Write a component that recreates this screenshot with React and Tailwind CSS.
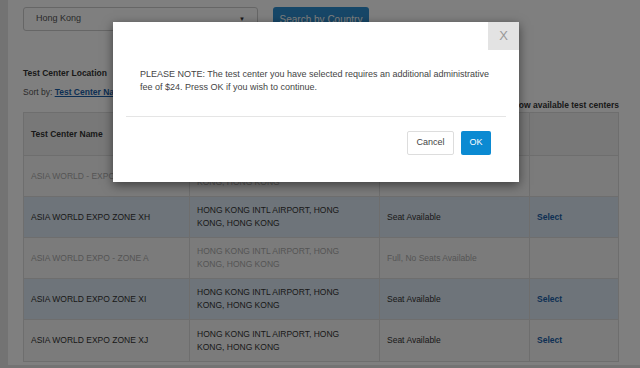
import React from 'react';

const rows = [
  { name: 'ASIA WORLD - EXPO - ZONE B', status: 'Full, No Seats Available', disabled: true },
  { name: 'ASIA WORLD EXPO ZONE XH', status: 'Seat Available', highlight: true },
  { name: 'ASIA WORLD EXPO - ZONE A', status: 'Full, No Seats Available', disabled: true },
  { name: 'ASIA WORLD EXPO ZONE XI', status: 'Seat Available', highlight: true },
  { name: 'ASIA WORLD EXPO ZONE XJ', status: 'Seat Available' },
];

const App = () => {
  return (
    <div className="relative w-[640px] h-[368px] overflow-hidden bg-[#e6e6e6] font-['Liberation_Sans',Arial,sans-serif]">
      <div className="ml-[8px] h-[365px] bg-white pl-[15px] pr-[21px]">
        <div className="flex items-center gap-[15px] pt-[7px]">
          <div className="w-[235px] h-[24px] border border-[#ccc] rounded-[3px] flex items-center justify-between px-[12px] text-[9px] text-[#555]">
            <span>Hong Kong</span>
            <span className="text-[6px] text-[#333]">▼</span>
          </div>
          <div className="w-[96px] h-[24px] rounded-[3px] bg-[#2e8fd0] text-white text-[10px] flex items-center justify-center">
            Search by Country
          </div>
        </div>

        <div className="mt-[36px] text-[8.5px] font-bold text-[#333]">Test Center Location</div>
        <div className="mt-[6px] text-[8.5px] text-[#555]">
          Sort by: <span className="font-bold text-[#1a5fa8] underline">Test Center Name</span>
        </div>
        <div className="text-right text-[8.5px] font-bold text-[#333]">Show available test centers</div>

        <div className="mt-[1px] border border-[#ddd] text-[8.5px]">
          <div className="grid grid-cols-[166px_190px_150px_1fr] h-[43px] bg-[#f0f0f0] border-b border-[#ddd]">
            <div className="flex items-center px-[7px] font-bold text-[#333] border-r border-[#ddd]">Test Center Name</div>
            <div className="flex items-center px-[7px] font-bold text-[#333] border-r border-[#ddd]">Address</div>
            <div className="flex items-center px-[7px] font-bold text-[#333] border-r border-[#ddd]">Status</div>
            <div />
          </div>
          {rows.map((r, i) => (
            <div
              key={i}
              className={`grid grid-cols-[166px_190px_150px_1fr] h-[41px] border-b last:border-b-0 border-[#ddd] ${r.highlight ? 'bg-[#dce8f4]' : 'bg-[#f7f7f7]'} ${r.disabled ? 'text-[#aaa]' : 'text-[#333]'}`}
            >
              <div className="flex items-center px-[7px] border-r border-[#ddd]">{r.name}</div>
              <div className="flex items-center px-[7px] border-r border-[#ddd] leading-[13px]">
                HONG KONG INTL AIRPORT, HONG<br />KONG, HONG KONG
              </div>
              <div className="flex items-center px-[7px] border-r border-[#ddd]">{r.status}</div>
              <div className="flex items-center px-[7px] font-bold text-[#1a5fa8]">{r.disabled ? '' : 'Select'}</div>
            </div>
          ))}
        </div>
      </div>

      <div className="absolute inset-0 bg-black/50" />

      <div className="absolute left-[113px] top-[22px] w-[406px] h-[160px] bg-white shadow-[0_3px_10px_rgba(0,0,0,0.5)]">
        <div className="flex justify-end">
          <div className="w-[31px] h-[28px] bg-[#e3e3e3] flex items-center justify-center text-[13px] text-[#999]">X</div>
        </div>
        <div className="px-[27px] pt-[18px] text-[9px] leading-[13px] text-[#444]">
          PLEASE NOTE: The test center you have selected requires an additional administrative fee of $24. Press OK if you wish to continue.
        </div>
        <div className="mx-[13px] mt-[22px] border-t border-[#e5e5e5]" />
        <div className="flex justify-end gap-[7px] pr-[28px] pt-[14px]">
          <div className="w-[47px] h-[24px] border border-[#ddd] rounded-[2px] flex items-center justify-center text-[9px] text-[#444]">Cancel</div>
          <div className="w-[30px] h-[24px] rounded-[2px] bg-[#0b8ad2] flex items-center justify-center text-[9px] text-white">OK</div>
        </div>
      </div>
    </div>
  );
};

export default App;
